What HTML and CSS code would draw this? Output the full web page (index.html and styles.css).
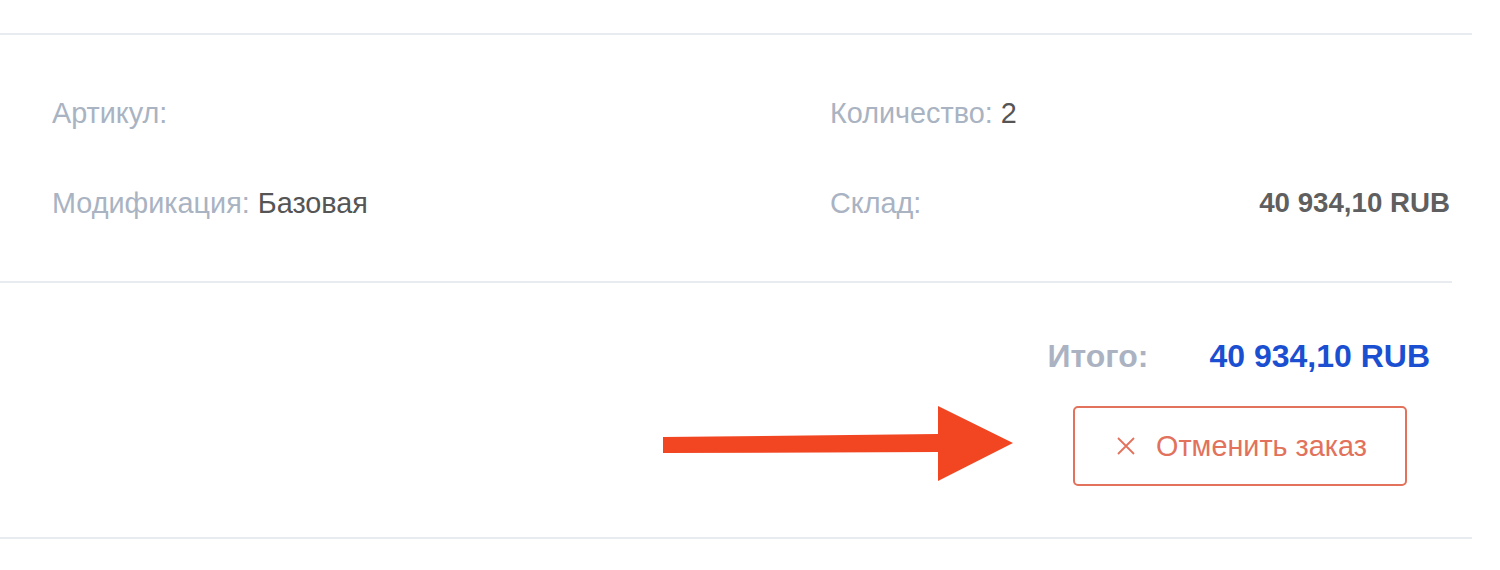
FILE: index.html
```html
<!DOCTYPE html>
<html lang="ru">
<head>
<meta charset="utf-8">
<title>Заказ</title>
<link rel="stylesheet" href="styles.css">
</head>
<body>
<div class="page">
  <div class="rule-top"></div>
  <section class="details">
    <div class="field"><span class="label">Артикул:</span></div>
    <div class="field"><span class="label">Количество:</span> <span class="value">2</span></div>
    <div class="cell-empty"></div>
    <div class="field"><span class="label">Модификация:</span> <span class="value">Базовая</span></div>
    <div class="field"><span class="label">Склад:</span></div>
    <div class="price">40&nbsp;934,10 RUB</div>
  </section>
  <section class="summary">
    <div class="total">
      <span class="total-label">Итого:</span>
      <span class="total-value">40&nbsp;934,10 RUB</span>
    </div>
    <div class="actions">
      <svg class="arrow" width="360" height="80" viewBox="0 0 360 80">
        <polygon points="0,31 275,28 275,0 350,37 275,75 275,46 0,47" fill="#f24522"/>
      </svg>
      <button class="cancel" type="button">
        <svg class="cancel-icon" width="18" height="18" viewBox="0 0 18 18">
          <path d="M1 1 L17 17 M17 1 L1 17" stroke="#e2725b" stroke-width="1.8" fill="none"/>
        </svg>
        <span>Отменить заказ</span>
      </button>
    </div>
  </section>
</div>
</body>
</html>
```

FILE: styles.css
```css
html, body {
  margin: 0;
  padding: 0;
  background: #ffffff;
}

body {
  font-family: "Liberation Sans", Arial, sans-serif;
  color: #555555;
}

.page {
  width: 1500px;
}

.rule-top {
  margin-top: 33px;
  width: 1472px;
  height: 2px;
  background: #e8ecf1;
}

.details {
  width: 1452px;
  box-sizing: border-box;
  padding: 63px 2px 63px 52px;
  border-bottom: 2px solid #e8ecf1;
  display: grid;
  grid-template-columns: 778px 1fr auto;
  row-gap: 60px;
  font-size: 28.8px;
  line-height: 30px;
}

.label {
  color: #a9b3c2;
}

.value {
  color: #555555;
}

.price {
  font-weight: bold;
  font-size: 27.7px;
  color: #5f5f5f;
  text-align: right;
}

.summary {
  width: 1472px;
  box-sizing: border-box;
  padding: 55px 0 51px 0;
  border-bottom: 2px solid #e8ecf1;
}

.total {
  display: flex;
  justify-content: flex-end;
  align-items: center;
  gap: 61px;
  padding-right: 42px;
  font-size: 32px;
  line-height: 36px;
  font-weight: bold;
}

.total-label {
  color: #abb3c2;
}

.total-value {
  color: #1b4fd1;
}

.actions {
  position: relative;
  display: flex;
  justify-content: flex-end;
  margin-top: 32px;
  padding-right: 65px;
}

.arrow {
  position: absolute;
  left: 663px;
  top: 0;
}

.cancel {
  display: flex;
  align-items: center;
  gap: 21px;
  box-sizing: border-box;
  width: 334px;
  height: 80px;
  padding: 0 0 0 42px;
  border: 2px solid #e2725b;
  border-radius: 5px;
  background: #ffffff;
  color: #e2725b;
  font-family: "Liberation Sans", Arial, sans-serif;
  font-size: 28.8px;
  cursor: pointer;
}

.cancel-icon {
  flex: none;
}
```
